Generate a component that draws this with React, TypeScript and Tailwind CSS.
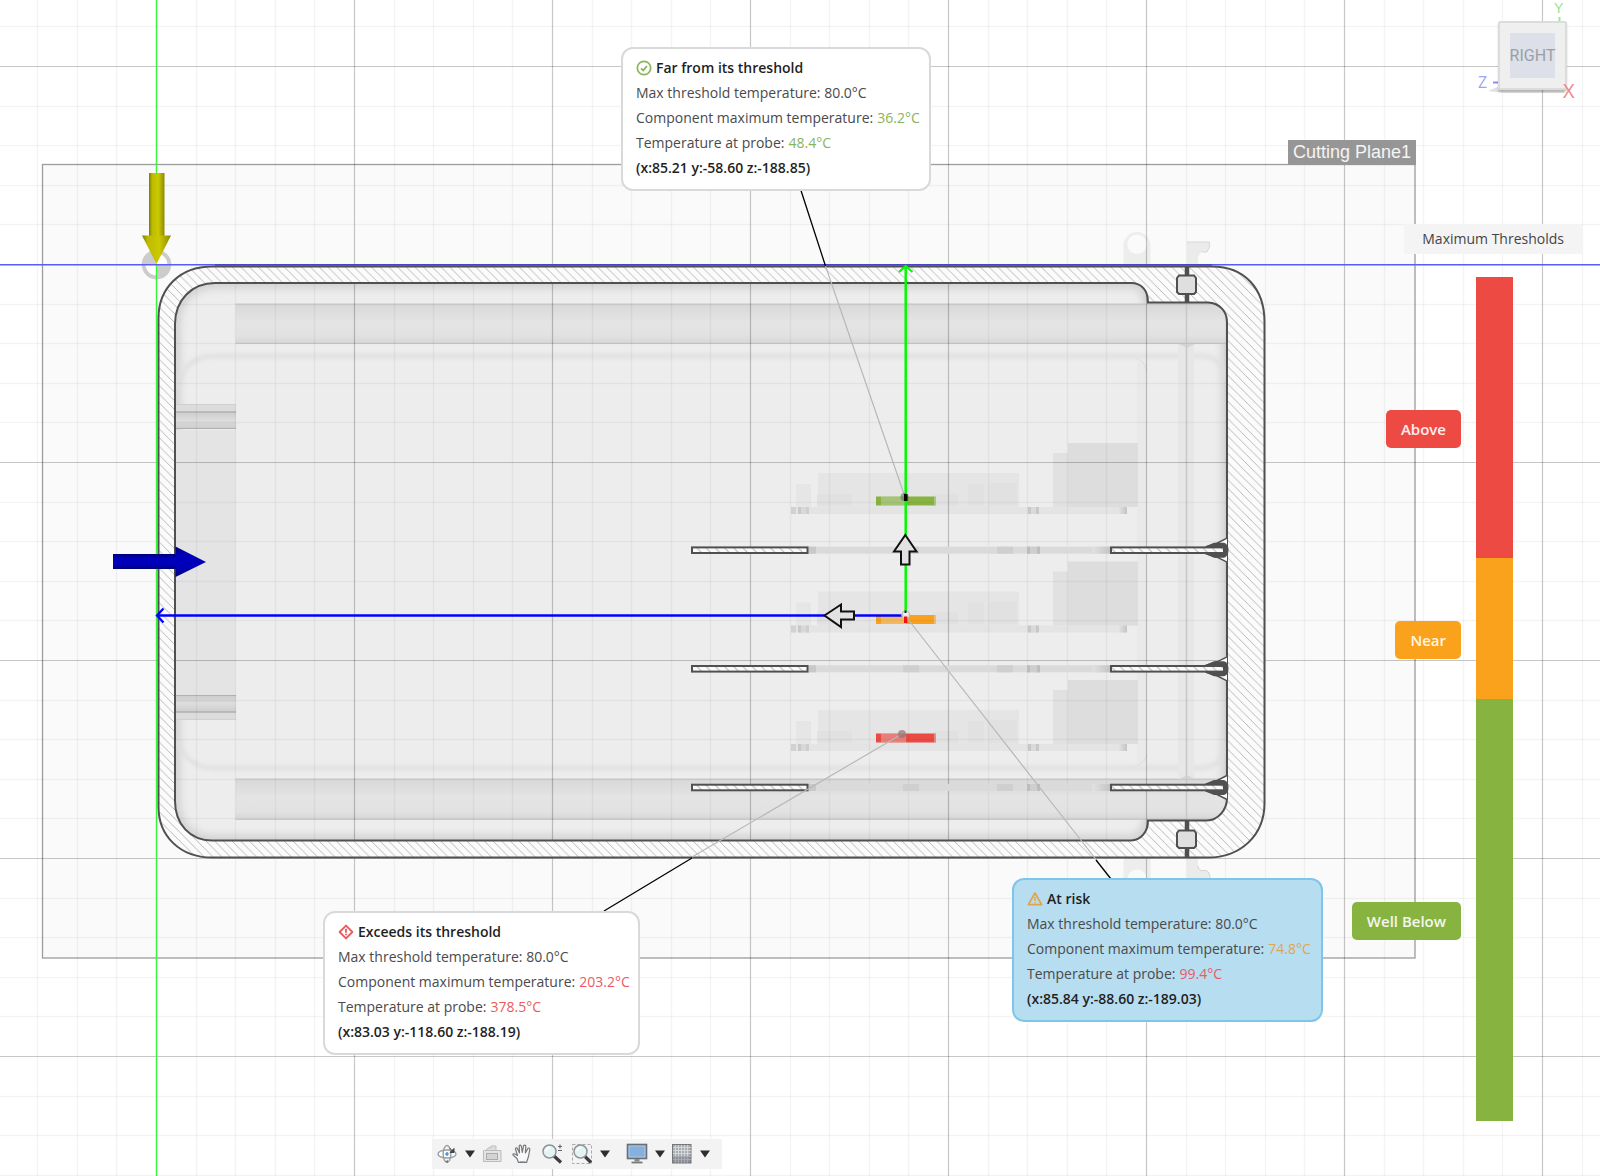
import React from "react";

const DARK = "#505050";

type Tone = "green" | "red" | "orange";

const toneClass: Record<Tone, string> = {
  green: "text-[#8bb35a]",
  red: "text-[#ec5a5c]",
  orange: "text-[#e0a64e]",
};

function CheckIcon() {
  return (
    <svg width="16" height="16" viewBox="0 0 16 16" fill="none" aria-hidden="true">
      <circle cx="8" cy="8" r="6.7" stroke="#8bb35a" strokeWidth="1.7" />
      <path d="M5 8.4 7.2 10.4 11 6" stroke="#8bb35a" strokeWidth="1.8" />
    </svg>
  );
}

function DiamondIcon() {
  return (
    <svg width="16" height="16" viewBox="0 0 16 16" fill="none" aria-hidden="true">
      <path d="M8 1.6 14.4 8 8 14.4 1.6 8Z" stroke="#ec5a5c" strokeWidth="1.9" strokeLinejoin="round" />
      <path d="M8 4.8V8.8M8 9.8V11.2" stroke="#ec5a5c" strokeWidth="1.8" />
    </svg>
  );
}

function WarnIcon() {
  return (
    <svg width="16" height="16" viewBox="0 0 16 16" fill="none" aria-hidden="true">
      <path d="M8 2 14.6 13.6H1.4Z" stroke="#e0a64e" strokeWidth="1.8" strokeLinejoin="round" />
      <path d="M8 6V10M8 11V12.3" stroke="#e0a64e" strokeWidth="1.5" />
    </svg>
  );
}

type CalloutProps = {
  place: string;
  icon: React.ReactNode;
  title: string;
  max: string;
  maxTone: Tone;
  probe: string;
  probeTone: Tone;
  coords: string;
};

function Callout({ place, icon, title, max, maxTone, probe, probeTone, coords }: CalloutProps) {
  return (
    <section
      className={`absolute z-10 rounded-xl border-2 pt-1.5 pr-2 pb-[9px] pl-[13px] text-sm leading-[25px] whitespace-nowrap text-[#4a4a4a] ${place}`}
    >
      <h2 className="flex items-center gap-1 font-semibold text-[#1f1f1f]">
        {icon}
        {title}
      </h2>
      <p>Max threshold temperature: 80.0°C</p>
      <p className="flex gap-1">
        Component maximum temperature: <span className={toneClass[maxTone]}>{max}</span>
      </p>
      <p className="flex gap-1">
        Temperature at probe: <span className={toneClass[probeTone]}>{probe}</span>
      </p>
      <p className="font-semibold text-[#1f1f1f]">{coords}</p>
    </section>
  );
}

function Grid() {
  const lines: React.ReactNode[] = [];
  for (let k = -7; k <= 60; k++) {
    const major = k % 5 === 0;
    const x = Math.round(156 + k * 39.6) + 0.5;
    const y = Math.round(264 + k * 39.6) + 0.5;
    const w = major ? 1.2 : 1.4;
    const o = major ? 0.22 : 0.045;
    if (k !== 0) {
      lines.push(<line key={`v${k}`} x1={x} x2={x} y1="0" y2="100%" strokeWidth={w} strokeOpacity={o} />);
      lines.push(<line key={`h${k}`} y1={y} y2={y} x1="0" x2="100%" strokeWidth={w} strokeOpacity={o} />);
    }
  }
  return <g stroke="#000">{lines}</g>;
}

function BoardParts({ dy, color }: { dy: number; color: string }) {
  return (
    <g transform={`translate(0 ${dy})`}>
      <rect x="796" y="484" width="15" height="23" fill="#e6e6e6" />
      <rect x="818" y="473" width="201" height="34" fill="#e5e5e5" />
      <rect x="817" y="494" width="35" height="12" fill="#e1e1e1" />
      <rect x="933" y="494" width="25" height="12" fill="#e1e1e1" />
      <rect x="968" y="484" width="16" height="22" fill="#e1e1e1" />
      <rect x="989" y="483" width="28" height="23" fill="#e1e1e1" />
      <rect x="1053" y="453" width="85" height="54" fill="#e1e1e1" />
      <rect x="1068" y="443" width="70" height="64" fill="#dddddd" />
      <rect x="791" y="507" width="336" height="7" fill="#e4e4e4" />
      <rect x="791" y="507" width="5" height="7" fill="#d2d2d2" />
      <rect x="798" y="507" width="11" height="7" fill="#d8d8d8" />
      <rect x="798" y="507" width="3" height="7" fill="#c8c8c8" />
      <rect x="806" y="507" width="3" height="7" fill="#cecece" />
      <rect x="1028" y="507" width="3" height="7" fill="#c8c8c8" />
      <rect x="1031" y="507" width="5" height="7" fill="#dadada" />
      <rect x="1036" y="507" width="3" height="7" fill="#c8c8c8" />
      <rect x="1119" y="507" width="8" height="7" fill="url(#tip)" />
      <rect x="876" y="496.5" width="60" height="9" fill={color} />
      <rect x="881" y="496.5" width="25" height="9" fill="#e6e6e6" fillOpacity=".33" />
      <rect x="934" y="496.5" width="2" height="9" fill="#e6e6e6" fillOpacity=".4" />
    </g>
  );
}

function Board({ y }: { y: number }) {
  return (
    <g transform={`translate(0 ${y})`}>
      <rect x="808" y="-3.5" width="302" height="7" fill="#dadada" />
      <rect x="808" y="-3.5" width="8" height="7" fill="#c8c8c8" />
      <rect x="903" y="-3.5" width="16" height="7" fill="#cfcfcf" />
      <rect x="997" y="-3.5" width="16" height="7" fill="#cfcfcf" />
      <rect x="1027" y="-3.5" width="13" height="7" fill="#cecece" />
      <rect x="1027" y="-3.5" width="3" height="7" fill="#bdbdbd" />
      <rect x="1037" y="-3.5" width="3" height="7" fill="#bdbdbd" />
      <rect x="1092" y="-3.5" width="18" height="7" fill="url(#tip)" />
      <path d="M1227 -12 1217 -7 1206 -3.5V3.5L1217 7 1227 12" fill="#fafafa" stroke={DARK} strokeWidth="1.5" />
      <path d="M1206 -4 1214 -7.5H1224Q1228.5 -6 1228.5 0T1224 7.5H1214L1206 4Z" fill={DARK} />
      <rect x="692" y="-2.8" width="115.5" height="5.6" fill="url(#ticks)" stroke={DARK} strokeWidth="2" />
      <rect x="1111" y="-2.8" width="113" height="5.6" fill="url(#ticks)" stroke={DARK} strokeWidth="2" />
    </g>
  );
}

function Tab() {
  return (
    <g>
      <rect x="176" y="404" width="60" height="8" fill="#dcdcdc" />
      <rect x="176" y="412" width="60" height="17" fill="url(#tab)" />
      <path d="M176 404.5H236" stroke="#d0d0d0" />
      <path d="M176 412H236" stroke="#b0b0b0" strokeWidth="1.5" />
      <path d="M176 428.5H236" stroke="#b0b0b0" />
    </g>
  );
}

const OUTER =
  "M212 266.5H1212C1244 266.5 1264.5 288 1264.5 322V803C1264.5 836 1240 857.5 1208 857.5H212C180 857.5 158.5 836 158.5 807V318C158.5 288 180 266.5 212 266.5Z";
const INNER =
  "M215 283H1131C1142 283 1148 291 1148 302.5H1208C1220 303 1227 312 1227 322V798C1227 810 1218 820 1207 820.5H1148C1148 832 1141 840 1131 840.5H212C190 840.5 175 824 175 801V324C175 300 192 283 215 283Z";

function Scene() {
  return (
    <svg className="absolute inset-0 h-full w-full" role="img" aria-label="Enclosure section view">
      <defs>
        <pattern id="hatch" width="8.7" height="8.7" patternUnits="userSpaceOnUse">
          <rect width="8.7" height="8.7" fill="#fbfbfb" />
          <path d="M-1 -1 9.7 9.7M-1 7.7 1 9.7M7.7 -1 9.7 1" stroke="#adadad" strokeWidth=".85" />
        </pattern>
        <pattern id="ticks" width="9.2" height="9.2" patternUnits="userSpaceOnUse">
          <rect width="9.2" height="9.2" fill="#fbfbfb" />
          <path d="M-1 -1 10.2 10.2M-1 8.2 1 10.2M8.2 -1 10.2 1" stroke="#b5b5b5" strokeWidth="1" />
        </pattern>
        <linearGradient id="strip" x1="0" x2="0" y1="0" y2="1">
          <stop offset="0" stopColor="#d8d8d8" />
          <stop offset=".45" stopColor="#e4e4e4" />
          <stop offset=".8" stopColor="#e2e2e2" />
          <stop offset="1" stopColor="#d6d6d6" />
        </linearGradient>
        <linearGradient id="tab" x1="0" x2="0" y1="0" y2="1">
          <stop offset="0" stopColor="#cdcdcd" />
          <stop offset=".5" stopColor="#dddddd" />
          <stop offset="1" stopColor="#cccccc" />
        </linearGradient>
        <linearGradient id="tip">
          <stop offset="0" stopColor="#e2e2e2" />
          <stop offset="1" stopColor="#c4c4c4" />
        </linearGradient>
        <linearGradient id="yellow">
          <stop offset="0" stopColor="#7c7a00" />
          <stop offset=".2" stopColor="#bdbb00" />
          <stop offset=".6" stopColor="#cbc900" />
          <stop offset="1" stopColor="#8d8b00" />
        </linearGradient>
        <linearGradient id="navy" x1="0" x2="0" y1="0" y2="1">
          <stop offset="0" stopColor="#00007c" />
          <stop offset=".3" stopColor="#0000bd" />
          <stop offset=".7" stopColor="#0000b8" />
          <stop offset="1" stopColor="#000070" />
        </linearGradient>
        <clipPath id="cavity">
          <path d={INNER} />
        </clipPath>
        <filter id="soft">
          <feGaussianBlur stdDeviation="4" />
        </filter>
        <filter id="faint">
          <feGaussianBlur stdDeviation="2" />
        </filter>
      </defs>

      <rect x="42.5" y="164.5" width="1372.5" height="793.5" fill="#fafafa" stroke="#9c9c9c" strokeWidth="1.3" />

      {/* hinge and latch behind the shell */}
      <path
        fillRule="evenodd"
        d="M1123.5 266V246A13.5 14 0 0 1 1150.5 246V266ZM1137 234.5A9.8 9.8 0 1 0 1137 254.1A9.8 9.8 0 1 0 1137 234.5Z"
        fill="#ededed"
      />
      <path d="M1187 265V242H1210V247L1207 252H1202Q1198 254 1198 259V265Z" fill="#ebebeb" />
      <path d="M1187 242H1209.5V247L1207 252H1202" fill="none" stroke="#d8d8d8" />
      <path d="M1123.5 858H1150.5V880H1123.5Z" fill="#ededed" />
      <ellipse cx="1137" cy="878.5" rx="9.5" ry="9" fill="#fafafa" />
      <path d="M1187 858H1198V867Q1198 870 1201 870.5H1206Q1210 872 1210 880H1187Z" fill="#ebebeb" />
      <path d="M1198 866Q1198 870 1201 870.5H1206Q1210 872 1210 878" fill="none" stroke="#d4d4d4" />

      <g clipPath="url(#cavity)">
        <rect x="170" y="280" width="1060" height="565" fill="#ededed" />
        <path d={INNER} fill="none" stroke="#cfcfcf" strokeWidth="10" filter="url(#soft)" />
        <rect x="175" y="430" width="60.5" height="266" fill="#e4e4e4" />
        <rect x="235.5" y="304" width="995" height="39.5" fill="url(#strip)" />
        <rect x="235.5" y="779" width="995" height="40.5" fill="url(#strip)" />
        <path d="M235.5 304H1228M235.5 343.5H1228M235.5 779H1228M235.5 819.5H1228" stroke="#cacaca" />
        <path
          d="M177 388C181 370 192 356 215 356H1200Q1226 357 1227 382M177 738C181 754 192 768 215 768H1200Q1226 767 1227 742"
          fill="none"
          stroke="#dfdfdf"
          strokeWidth="4"
          filter="url(#faint)"
        />
        <rect x="1137" y="358" width="10" height="408" fill="#e9e9e9" />
        <path d="M1135 357Q1146 362 1147 372M1135 767Q1146 762 1147 754" fill="none" stroke="#dddddd" />
        <rect x="1178" y="344" width="16" height="435" fill="#e7e7e7" />
        <path d="M1186.5 303V821" stroke="#d2d2d2" strokeWidth="1.6" />
        <path d="M1179 344H1195L1187 348ZM1179 779H1195L1187 775Z" fill="#d6d6d6" />
        <Tab />
        <g transform="matrix(1 0 0 -1 0 1124)">
          <Tab />
        </g>
      </g>

      <BoardParts dy={0} color="#87b341" />
      <BoardParts dy={118.5} color="#f8a11e" />
      <BoardParts dy={237} color="#ea4b43" />

      <Grid />

      <path d="M156.5 0V1176" stroke="#3bf53b" strokeWidth="1.4" />
      <path fillRule="evenodd" d={`${OUTER}${INNER}`} fill="url(#hatch)" />
      <path d={OUTER} fill="none" stroke={DARK} strokeWidth="2" />
      <path d={INNER} fill="none" stroke={DARK} strokeWidth="2" />

      <path d="M1187 267V303M1187 820V857" stroke={DARK} strokeWidth="4.5" />
      <path
        d="M1179 275.5H1194L1196 278V292L1194 294H1179L1177 292V278ZM1179 830.5H1194L1196 833V846L1194 848H1179L1177 846V833Z"
        fill="#dfdfdf"
        stroke={DARK}
        strokeWidth="2"
      />

      {[550.2, 668.8, 787.5].map((y) => (
        <Board key={y} y={y} />
      ))}

      <circle cx="156.5" cy="264.5" r="12.8" fill="#fff" stroke="#cccccc" strokeWidth="4" />
      <path
        d="M156.5 264.5V251.5A13 13 0 0 0 143.5 264.5ZM156.5 264.5H169.5A13 13 0 0 1 156.5 277.5Z"
        fill="#cccccc"
      />
      <path d="M156.5 264V280" stroke="#3bf53b" strokeWidth="1.4" />
      <path d="M0 264.8H3000" stroke="#5a5af5" strokeWidth="1.5" />
      <path d="M215 265H1212" stroke="#3333a0" strokeWidth="1.2" />

      <rect x="149" y="173" width="15.5" height="64" fill="url(#yellow)" />
      <path d="M142 235.5H171L156.5 264Z" fill="url(#yellow)" />
      <rect x="113" y="554" width="64" height="15" fill="url(#navy)" />
      <path d="M175.5 546.5 206 562 175.5 577Z" fill="url(#navy)" />

      {/* leader lines */}
      <path d="M825.5 266 905 497M907 618 1098 862M902 734 692 857" fill="none" stroke="#b8b8b8" strokeWidth="1.2" />
      <path d="M800.5 189 825.5 266M1096 860 1111 879M692 858 604 911" fill="none" stroke="#000" strokeWidth="1.3" />

      <path d="M905.7 267V613" stroke="#00fa00" strokeWidth="2.5" />
      <path d="M899 272 905.7 266 912.5 272" fill="none" stroke="#00fa00" strokeWidth="2.3" />
      <path d="M158 615.5H904" stroke="#0000ff" strokeWidth="2.5" />
      <path d="M163.5 608.5 157 615.5 163.5 622.5" fill="none" stroke="#0000ff" strokeWidth="2.3" />
      <circle cx="904.5" cy="497" r="4" fill="#555" fillOpacity=".5" />
      <rect x="904" y="494" width="3.5" height="7" fill="#000" />
      <circle cx="902" cy="734" r="4" fill="#8e7474" fillOpacity=".7" />
      <circle cx="905.7" cy="615" r="3.8" fill="#eeeeee" fillOpacity=".9" stroke="#b9b9b9" strokeWidth="1.3" />
      <rect x="904" y="616.5" width="3.3" height="6.5" fill="#f01010" />
      <rect x="904.5" y="610.5" width="2" height="2.5" fill="#222" />
      <path d="M905.3 535 916.5 551.5H909.5V564.5H901V551.5H894Z" fill="#e2e2e2" stroke="#111" strokeWidth="2" />
      <path d="M824.5 615.5 841 604.5V611.5H854V619.5H841V627Z" fill="#e2e2e2" stroke="#111" strokeWidth="2" />
    </svg>
  );
}

function Caret({ label }: { label: string }) {
  return (
    <button type="button" aria-label={label} className="flex h-[30px] w-[15px] items-center justify-center">
      <svg width="10" height="8" viewBox="0 0 10 8" aria-hidden="true">
        <path d="M0 .5H10L5 7.5Z" fill="#2e2e2e" />
      </svg>
    </button>
  );
}

function Tool({ label, children }: { label: string; children: React.ReactNode }) {
  return (
    <button type="button" aria-label={label} className="flex h-[30px] w-[30px] items-center justify-center">
      <svg width="22" height="22" viewBox="0 0 22 22" fill="none" aria-hidden="true">
        {children}
      </svg>
    </button>
  );
}

function Toolbar() {
  return (
    <nav aria-label="Navigation" className="relative mt-[18px] ml-[432px] flex self-start bg-[#f3f3f3] pr-2.5">
      <Tool label="Orbit">
        <ellipse cx="11" cy="11" rx="9" ry="4" stroke="#9a9ea3" strokeWidth="1.4" fill="#fff" fillOpacity=".7" />
        <ellipse cx="11" cy="11" rx="3.8" ry="8.5" stroke="#9a9ea3" strokeWidth="1.4" />
        <path d="M9 11H13M11 9V13" stroke="#2b7bd0" strokeWidth="1.2" />
        <path d="M13.5 5 16 7.5M18 5.5V9.5H14Z" stroke="#444" strokeWidth="1" fill="#444" />
        <path d="M9 18.5 12 17V20Z" fill="#777" />
      </Tool>
      <Caret label="Orbit options" />
      <Tool label="Look at">
        <path d="M3.5 7.5H20V18.5H2.5V7.5Z" fill="#e4e4e4" stroke="#bbb" />
        <path d="M5 7 8 4.5H10V3H15V7" fill="#ddd" stroke="#bfbfbf" />
        <rect x="5.5" y="10.5" width="11" height="6" fill="#d3d3d3" stroke="#aaa" />
      </Tool>
      <Tool label="Pan">
        <path
          d="M7.5 19.5 6 15.5 2 12Q1.5 10.5 3.5 10.8L6.5 12.5 4.5 6Q4.5 4.5 6.2 5L8.5 10 8.2 3Q9 1.3 10.3 3L11.3 9.5 12.5 2.8Q14 1.5 14.8 3L14.4 10 17 5.2Q18.8 4.5 18.8 6.5L17.5 13.5 15.5 19.5Z"
          fill="#f8f8f8"
          stroke="#75797d"
          strokeWidth="1.2"
          strokeLinejoin="round"
        />
        <path d="M8.5 18.5H14.5" stroke="#aaa" />
      </Tool>
      <Tool label="Zoom">
        <path d="M13 13 20 19.5" stroke="#3c3c3c" strokeWidth="3.2" />
        <circle cx="8.5" cy="8.5" r="6.5" fill="#e6f3f3" stroke="#8d9797" strokeWidth="1.5" />
        <path d="M5 8Q5.5 5 9 4.5" stroke="#fff" strokeWidth="1.5" />
        <path d="M17 3.5H21M19 1.5V5.5M17 7.5H21" stroke="#666" strokeWidth="1.1" />
      </Tool>
      <Tool label="Zoom window">
        <rect x="1.5" y="1.5" width="19" height="19" stroke="#b0a8a8" strokeDasharray="3 2" />
        <path d="M14 13.5 20 19.5" stroke="#3c3c3c" strokeWidth="3.2" />
        <circle cx="9.5" cy="8.5" r="6.5" fill="#e6f3f3" stroke="#8d9797" strokeWidth="1.5" />
        <path d="M6 8Q6.5 5 10 4.5" stroke="#fff" strokeWidth="1.5" />
      </Tool>
      <Caret label="Zoom options" />
      <div className="w-2.5" />
      <Tool label="Display settings">
        <rect x="1.5" y="1.5" width="19" height="14" fill="#7fa9d8" stroke="#6a6f75" strokeWidth="1.6" />
        <rect x="3" y="3" width="16" height="11" fill="#86b0de" stroke="#c5d8ec" strokeWidth=".6" />
        <path d="M8.5 16H13.5V18.5H8.5Z" fill="#888" />
        <path d="M5.5 19.5H16.5" stroke="#777" strokeWidth="1.8" />
      </Tool>
      <Caret label="Display options" />
      <Tool label="Grid and snaps">
        <rect x="1.5" y="1.5" width="18.5" height="18.5" fill="#a9adb3" stroke="#777" />
        <path
          d="M4.5 2V20M7.5 2V20M10.5 2V20M13.5 2V20M16.5 2V20M2 4.5H20M2 7.5H20M2 10.5H20M2 13.5H20M2 16.5H20"
          stroke="#d8dade"
          strokeWidth=".9"
        />
        <path d="M2 13H20V20H2Z" fill="#555c68" fillOpacity=".35" />
      </Tool>
      <Caret label="Grid options" />
    </nav>
  );
}

function ViewCube() {
  return (
    <div className="relative">
      <svg className="absolute -top-[21px] -left-6 h-[120px] w-[120px] overflow-visible" aria-hidden="true">
        <path d="M14 91 26 86H92L90 93H30Z" fill="#000" fillOpacity=".12" />
        <path d="M85.5 17V22" stroke="#8df08d" strokeWidth="2" />
        <path d="M19 82.5H25" stroke="#8d8df5" strokeWidth="2" />
      </svg>
      <button
        type="button"
        className="relative flex h-[69px] w-[69px] items-center justify-center rounded-xs border-2 border-[#dcdcdc] bg-[#efefef] shadow-[0_2px_2px_rgba(0,0,0,0.2)]"
      >
        <span className="flex h-[45px] w-[45px] items-center justify-center bg-[#dde0e8] font-['Roboto',sans-serif] text-base text-[#9a9fa7]">
          RIGHT
        </span>
      </button>
      <span className="absolute -top-[21px] left-14 font-['Liberation_Sans',sans-serif] text-sm leading-4 text-[#97e597]">
        Y
      </span>
      <span className="absolute top-[51px] -left-5 text-base leading-5 text-[#a3a3ee]">Z</span>
      <span className="absolute top-[60px] left-[65px] text-xl leading-5 text-[#f58585]">X</span>
    </div>
  );
}

const bands = [
  { label: "Above", grow: "flex-2", color: "bg-[#ed4a43]" },
  { label: "Near", grow: "flex-1", color: "bg-[#faa21b]" },
  { label: "Well Below", grow: "flex-3", color: "bg-[#87b341]" },
];

function Legend() {
  return (
    <aside className="relative flex flex-col items-end" aria-label="Maximum thresholds">
      <h1 className="mr-[18px] bg-[#f4f4f4] px-[18px] text-sm leading-[30px] font-medium text-[#444]">
        Maximum Thresholds
      </h1>
      <ul className="mt-[23px] mr-[87px] flex h-[844px] flex-col">
        {bands.map((b) => (
          <li key={b.label} className={`flex justify-end gap-[15px] ${b.grow}`}>
            <div className="flex items-center pt-[22px]">
              <span
                className={`rounded-[5px] px-[15px] text-[15px] leading-[38px] font-semibold text-white/90 ${b.color}`}
              >
                {b.label}
              </span>
            </div>
            <div className={`w-[37px] ${b.color}`} />
          </li>
        ))}
      </ul>
    </aside>
  );
}

export default function App() {
  return (
    <main className="relative flex min-h-screen w-full flex-col overflow-hidden bg-white font-['Open_Sans','Noto_Sans',sans-serif]">
      <Scene />
      <p className="absolute top-[140px] left-[1288px] bg-[#969696] px-[5px] font-['Liberation_Sans',sans-serif] text-lg leading-[25px] text-white/90">
        Cutting Plane1
      </p>

      <Callout
        place="top-[47px] left-[621px] min-w-[310px] border-[#d9d9d9] bg-white"
        icon={<CheckIcon />}
        title="Far from its threshold"
        max="36.2°C"
        maxTone="green"
        probe="48.4°C"
        probeTone="green"
        coords="(x:85.21 y:-58.60 z:-188.85)"
      />
      <Callout
        place="top-[911px] left-[323px] min-w-[317px] border-[#d9d9d9] bg-white"
        icon={<DiamondIcon />}
        title="Exceeds its threshold"
        max="203.2°C"
        maxTone="red"
        probe="378.5°C"
        probeTone="red"
        coords="(x:83.03 y:-118.60 z:-188.19)"
      />
      <Callout
        place="top-[878px] left-[1012px] min-w-[311px] border-[#7cc6ea] bg-[#b7ddf0]"
        icon={<WarnIcon />}
        title="At risk"
        max="74.8°C"
        maxTone="orange"
        probe="99.4°C"
        probeTone="red"
        coords="(x:85.84 y:-88.60 z:-189.03)"
      />

      <header className="flex h-[224px] items-start justify-end pt-[21px] pr-[33px]">
        <ViewCube />
      </header>
      <Legend />
      <Toolbar />
    </main>
  );
}
